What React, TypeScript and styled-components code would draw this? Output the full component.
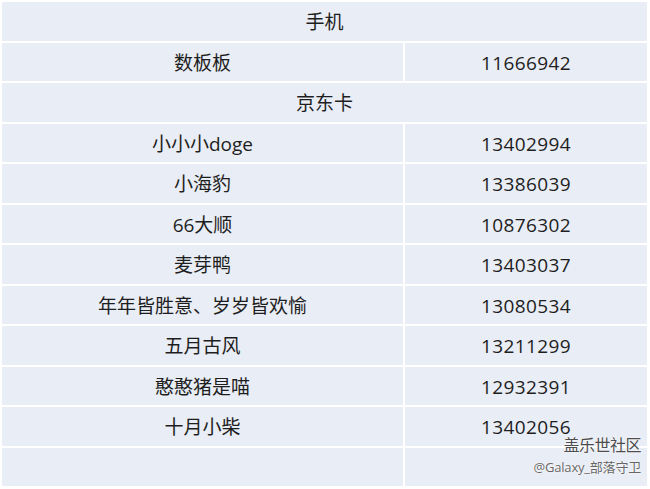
import React from 'react';
import styled, { createGlobalStyle } from 'styled-components';

const rows: { name: string; id?: string; header?: boolean }[] = [
  { name: '手机', header: true },
  { name: '数板板', id: '11666942' },
  { name: '京东卡', header: true },
  { name: '小小小doge', id: '13402994' },
  { name: '小海豹', id: '13386039' },
  { name: '66大顺', id: '10876302' },
  { name: '麦芽鸭', id: '13403037' },
  { name: '年年皆胜意、岁岁皆欢愉', id: '13080534' },
  { name: '五月古风', id: '13211299' },
  { name: '憨憨猪是喵', id: '12932391' },
  { name: '十月小柴', id: '13402056' },
  { name: '', id: '' },
];

const App: React.FC = () => {
  return (
    <>
      <GlobalStyle />
      <Page>
        <Table>
          <colgroup>
            <col style={{ width: 401 }} />
            <col style={{ width: 242 }} />
          </colgroup>
          <tbody>
            {rows.map((r, i) =>
              r.header ? (
                <tr key={i}>
                  <Cell colSpan={2}>{r.name}</Cell>
                </tr>
              ) : (
                <tr key={i}>
                  <Cell>{r.name}</Cell>
                  <Cell $num>{r.id}</Cell>
                </tr>
              )
            )}
          </tbody>
        </Table>
        <Watermark>
          <Brand>盖乐世社区</Brand>
          <Author>@Galaxy_部落守卫</Author>
        </Watermark>
      </Page>
    </>
  );
};

const GlobalStyle = createGlobalStyle`
  html, body {
    margin: 0;
    padding: 0;
    background: #ffffff;
  }
`;

const Page = styled.div`
  position: relative;
  width: 650px;
  height: 489px;
  overflow: hidden;
  font-family: "Open Sans", "Noto Sans CJK SC", sans-serif;
`;

const Table = styled.table`
  table-layout: fixed;
  width: 649px;
  border-collapse: separate;
  border-spacing: 2px;
  margin: 0;
`;

const Cell = styled.td<{ $num?: boolean }>`
  height: 38.5px;
  padding: 3px 0 0;
  box-sizing: border-box;
  background: #e9edf5;
  text-align: center;
  vertical-align: middle;
  font-size: 19px;
  color: #1e1e1e;
  line-height: 1;
  letter-spacing: ${(p) => (p.$num ? '0.4px' : '0')};
`;

const Watermark = styled.div`
  position: absolute;
  right: 9px;
  top: 435px;
  display: flex;
  flex-direction: column;
  align-items: flex-end;
  gap: 4px;
  text-shadow: 0 0 2px #fff, 0 0 1px #fff;
`;

const Brand = styled.div`
  font-size: 16px;
  line-height: 20px;
  color: #4d4d4d;
  letter-spacing: -0.5px;
`;

const Author = styled.div`
  font-size: 13px;
  line-height: 16px;
  color: #666666;
  letter-spacing: -0.2px;
`;

export default App;
